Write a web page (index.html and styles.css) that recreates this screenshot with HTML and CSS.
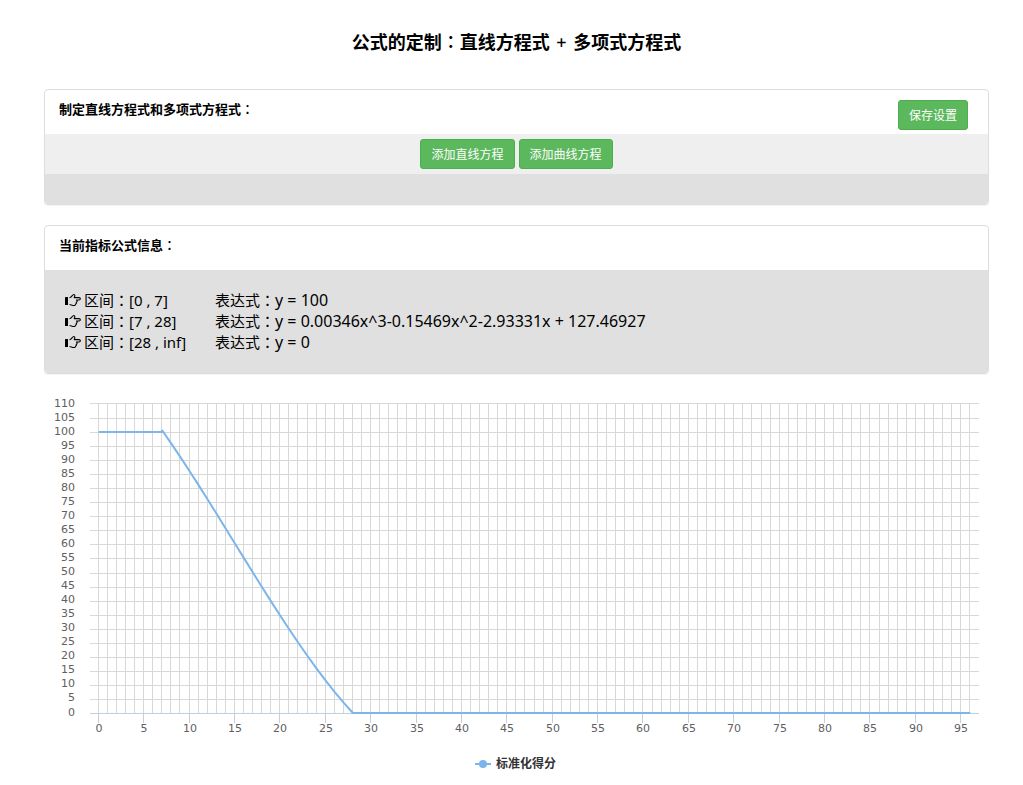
FILE: index.html
```html
<!DOCTYPE html>
<html lang="zh-CN">
<head>
<meta charset="utf-8">
<meta name="viewport" content="width=device-width, initial-scale=1">
<title>公式的定制</title>
<link rel="stylesheet" href="styles.css">
</head>
<body>
<svg class="sprite" aria-hidden="true">
  <symbol id="hand" viewBox="0 0 16 14">
    <rect x="0" y="4" width="3" height="8" rx="0.5" fill="currentColor"/>
    <path d="M4.5 4.8C6.6 4.6 7.3 1.5 8.8 1.5C10.3 1.5 10 3.2 9.2 4.6H14C15.8 4.6 15.8 7 14 7H11.4C12.6 7.4 12.3 9 11.2 9.2C11.8 10 11.3 11 10.5 11.1C10.6 12 10 12.5 9 12.5C7 12.5 6 11.5 4.5 11.5" fill="none" stroke="currentColor" stroke-width="1.1" stroke-linejoin="round"/>
  </symbol>
</svg>
<main class="page">
  <h1 class="title">公式的定制<span class="colon" lang="zh-TW">：</span>直线方程式 <span class="plus">+</span> 多项式方程式</h1>

  <section class="panel">
    <header class="panel-head">
      <h2 class="panel-title">制定直线方程式和多项式方程式<span class="colon" lang="zh-TW">：</span></h2>
      <button class="btn" type="button">保存设置</button>
    </header>
    <div class="toolbar">
      <button class="btn" type="button">添加直线方程</button>
      <button class="btn" type="button">添加曲线方程</button>
    </div>
    <div class="panel-foot"></div>
  </section>

  <section class="panel">
    <header class="panel-head">
      <h2 class="panel-title">当前指标公式信息<span class="colon" lang="zh-TW">：</span></h2>
    </header>
    <ul class="formulas">
      <li class="formula"><svg class="hand" aria-hidden="true"><use href="#hand"/></svg><span class="range">区间<span class="colon" lang="zh-TW">：</span>[0 , 7]</span><span>表达式<span class="colon" lang="zh-TW">：</span><span class="math">y = 100</span></span></li>
      <li class="formula"><svg class="hand" aria-hidden="true"><use href="#hand"/></svg><span class="range">区间<span class="colon" lang="zh-TW">：</span>[7 , 28]</span><span>表达式<span class="colon" lang="zh-TW">：</span><span class="math">y = 0.00346x^3-0.15469x^2-2.93331x + 127.46927</span></span></li>
      <li class="formula"><svg class="hand" aria-hidden="true"><use href="#hand"/></svg><span class="range">区间<span class="colon" lang="zh-TW">：</span>[28 , inf]</span><span>表达式<span class="colon" lang="zh-TW">：</span><span class="math">y = 0</span></span></li>
    </ul>
  </section>

  <svg class="chart" viewBox="0 0 945 400" role="img" aria-label="标准化得分">
    <path id="grid-x" class="grid"/>
    <path id="grid-y" class="grid"/>
    <path id="axis" class="axis"/>
    <path id="series" class="series"/>
    <g id="labels-y" class="labels labels-y"></g>
    <g id="labels-x" class="labels labels-x"></g>
    <path class="series" d="M431 380H447"/>
    <circle class="marker" cx="439" cy="380" r="4"/>
    <text class="legend" x="452" y="384">标准化得分</text>
  </svg>
</main>
<script src="chart.js"></script>
</body>
</html>
```

FILE: styles.css
```css
* { box-sizing: border-box; }
body {
  margin: 0;
  background: #fff;
  color: #000;
  font-family: "Noto Sans", "Noto Sans CJK SC", sans-serif;
  font-size: 15px;
  line-height: 21px;
}
.sprite { display: none; }
.page { padding: 0 34px 0 44px; }
.title {
  margin: 0;
  padding: 28px 0 34px;
  font-size: 18px;
  line-height: 26px;
  font-weight: 700;
  text-align: center;
}
.colon { font-family: "Noto Sans CJK TC", sans-serif; }
.title .colon, .panel-title .colon { font-weight: 500; }
.plus { padding: 0 2px; font-weight: 500; }
.panel {
  margin-bottom: 20px;
  border: 1px solid #ddd;
  border-radius: 4px;
  box-shadow: 0 1px 1px rgba(0, 0, 0, 0.05);
  overflow: hidden;
}
.panel-head {
  display: flex;
  justify-content: space-between;
  align-items: flex-start;
  height: 44px;
  padding: 10px 20px 0 14px;
}
.panel-title {
  margin: 0;
  font-size: 13px;
  line-height: 18px;
  font-weight: 700;
}
.btn {
  height: 30px;
  padding: 2px 10px 0;
  border: 1px solid #4cae4c;
  border-radius: 3px;
  background: #5cb85c;
  color: #fff;
  font-family: inherit;
  font-size: 12px;
  line-height: 18px;
  cursor: pointer;
}
.toolbar {
  display: flex;
  justify-content: center;
  gap: 4px;
  padding: 5px 0;
  background: #efefef;
}
.panel-foot { height: 30px; background: #e0e0e0; }
.formulas {
  margin: 0;
  padding: 19px 20px 21px;
  background: #e0e0e0;
  list-style: none;
}
.formula { display: flex; align-items: center; height: 21px; }
.hand { width: 16px; height: 14px; margin-right: 3px; }
.range { width: 131px; }
.math { font-size: 16px; }
.chart { display: block; width: 100%; height: auto; margin-top: -10px; }
.grid { fill: none; stroke: #d8d8d8; stroke-width: 1; }
.axis { fill: none; stroke: #c0d0e0; stroke-width: 1; }
.series { fill: none; stroke: #7cb5ec; stroke-width: 2; stroke-linejoin: round; }
.marker { fill: #7cb5ec; }
.labels { fill: #606060; font-family: "DejaVu Sans", sans-serif; font-size: 11px; }
.labels-y { text-anchor: end; }
.labels-x { text-anchor: middle; }
.legend { fill: #333; font-size: 12px; font-weight: 700; }
```

FILE: chart.js
```js
const plot = { left: 46, right: 935, top: 19, bottom: 329 };
const stepX = 9.079;
const gridX = i => Math.floor(54.25 + stepX * i) + 0.5;
const gridY = v => v === 110 ? plot.top + 0.5 : Math.floor(20.02 + (110 - v) * 2.817) + 0.5;
const setPath = (id, d) => document.getElementById(id).setAttribute('d', d);

function addLabel(group, x, y, text) {
  const node = document.createElementNS('http://www.w3.org/2000/svg', 'text');
  node.setAttribute('x', x);
  node.setAttribute('y', y);
  node.textContent = text;
  document.getElementById(group).appendChild(node);
}

let vertical = '';
let axis = `M${plot.left} ${plot.bottom + 0.5}H${plot.right}`;
for (let i = 0; i <= 96; i++) {
  vertical += `M${gridX(i)} ${plot.top}V${plot.bottom}`;
  if (i % 5 === 0) {
    axis += `M${gridX(i)} ${plot.bottom}V${plot.bottom + 10}`;
    addLabel('labels-x', gridX(i) + 0.5, 348, i);
  }
}
setPath('grid-x', vertical);
setPath('axis', axis);

let horizontal = '';
for (let v = 0; v <= 110; v += 5) {
  if (v > 0) horizontal += `M${plot.left} ${gridY(v)}H${plot.right}`;
  addLabel('labels-y', 31, v === 0 ? 332 : 23 + (110 - v) / 5 * 14, v);
}
setPath('grid-y', horizontal);

const cubic = x => 0.00346 * x ** 3 - 0.15469 * x ** 2 - 2.93331 * x + 127.46927;
const point = (x, y) => `${(54.7 + stepX * x).toFixed(2)} ${(329 - 2.81 * y).toFixed(2)}`;
const points = [point(0, 100), point(7, 100)];
for (let x = 7; x <= 28; x++) points.push(point(x, cubic(x)));
points.push(point(28, 0), point(96, 0));
setPath('series', 'M' + points.join('L'));
```
